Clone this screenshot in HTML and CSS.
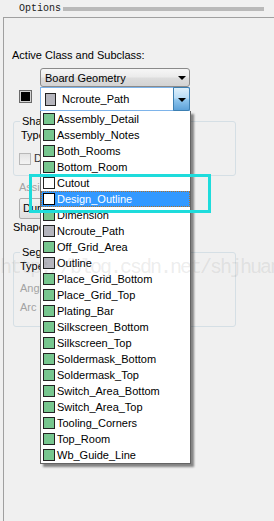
FILE: index.html
```html
<!DOCTYPE html>
<html lang="en">
<head>
    <meta charset="UTF-8">
    <meta name="viewport" content="width=device-width, initial-scale=1.0">
    <title>Options</title>
    <link rel="stylesheet" href="styles.css">
</head>
<body>
    <div class="window">
        <div class="title-row">
            <span class="title">Options</span>
            <span class="title-bar"></span>
        </div>

        <div class="frame">
            <div class="caption">Active Class and Subclass:</div>

            <div class="combo combo-class">
                <span class="combo-text">Board Geometry</span>
                <span class="arrow"></span>
            </div>

            <div class="subclass-row">
                <span class="color-box"><span class="color-fill"></span></span>
                <div class="combo-wrap">
                    <div class="combo combo-sub">
                        <span class="swatch gray"></span>
                        <span class="combo-text">Ncroute_Path</span>
                        <span class="drop-btn"><span class="arrow"></span></span>
                    </div>

                    <ul class="dropdown">
                        <li><span class="swatch green"></span>Assembly_Detail</li>
                        <li><span class="swatch green"></span>Assembly_Notes</li>
                        <li><span class="swatch green"></span>Both_Rooms</li>
                        <li><span class="swatch green"></span>Bottom_Room</li>
                        <li><span class="swatch white"></span>Cutout</li>
                        <li class="selected"><span class="swatch white"></span>Design_Outline</li>
                        <li><span class="swatch green"></span>Dimension</li>
                        <li><span class="swatch gray"></span>Ncroute_Path</li>
                        <li><span class="swatch green"></span>Off_Grid_Area</li>
                        <li><span class="swatch gray"></span>Outline</li>
                        <li><span class="swatch green"></span>Place_Grid_Bottom</li>
                        <li><span class="swatch green"></span>Place_Grid_Top</li>
                        <li><span class="swatch green"></span>Plating_Bar</li>
                        <li><span class="swatch green"></span>Silkscreen_Bottom</li>
                        <li><span class="swatch green"></span>Silkscreen_Top</li>
                        <li><span class="swatch green"></span>Soldermask_Bottom</li>
                        <li><span class="swatch green"></span>Soldermask_Top</li>
                        <li><span class="swatch green"></span>Switch_Area_Bottom</li>
                        <li><span class="swatch green"></span>Switch_Area_Top</li>
                        <li><span class="swatch green"></span>Tooling_Corners</li>
                        <li><span class="swatch green"></span>Top_Room</li>
                        <li><span class="swatch green"></span>Wb_Guide_Line</li>
                    </ul>
                </div>
            </div>

            <fieldset class="group group-shape">
                <legend>Shape Fill</legend>
                <div class="field">Type:</div>
                <label class="check"><span class="checkbox"></span>Dynamic thermal</label>
            </fieldset>

            <div class="field field-assign disabled">Assign net name:</div>
            <div class="select">Dummy Net</div>
            <div class="field field-grid">Shape grid:</div>

            <fieldset class="group group-seg">
                <legend>Segment Type</legend>
                <div class="field field-type">Type:</div>
                <div class="field field-angle disabled">Angle:</div>
                <div class="field field-arc disabled">Arc radius:</div>
            </fieldset>
        </div>

        <div class="highlight-box"></div>
        <div class="watermark">http://blog.csdn.net/shjhuang</div>
    </div>
</body>
</html>
```

FILE: styles.css
```css
* {
    box-sizing: border-box;
    margin: 0;
    padding: 0;
}

body {
    background-color: #f0f0f0;
    font-family: 'Liberation Sans', Arial, sans-serif;
    font-size: 11px;
    color: #000;
}

.window {
    position: relative;
    width: 274px;
    height: 521px;
    overflow: hidden;
}

/* Title line */
.title-row {
    display: flex;
    align-items: center;
    height: 17px;
}

.title {
    padding-left: 19px;
    font-family: 'Liberation Mono', monospace;
    font-size: 10px;
    line-height: 12px;
    color: #1a1a1a;
}

.title-bar {
    flex: 1;
    height: 4px;
    margin: 1px 10px 0 2px;
    background-color: #b9b9b9;
}

/* Main frame */
.frame {
    height: 504px;
    margin-left: 3px;
    padding-left: 8px;
    border-top: 1px solid #a0a0a0;
    border-left: 1px solid #a0a0a0;
}

.caption {
    margin-top: 31px;
    line-height: 13px;
}

.combo {
    display: flex;
    align-items: center;
    width: 150px;
}

.combo-class {
    height: 19px;
    margin: 6px 0 0 28px;
    padding-left: 4px;
    border: 1px solid #8a8a8a;
    border-radius: 3px;
    background: linear-gradient(#f6f6f6, #ebebeb 48%, #dddddd 52%, #d3d3d3);
}

.combo-class .arrow {
    margin: 0 3px 0 auto;
}

.arrow {
    width: 0;
    height: 0;
    border-left: 4px solid transparent;
    border-right: 4px solid transparent;
    border-top: 4px solid #000;
}

.subclass-row {
    display: flex;
    align-items: flex-start;
}

.color-box {
    display: flex;
    width: 13px;
    height: 13px;
    margin: 3px 0 0 7px;
    padding: 1px;
    border: 1px solid #6a6a6a;
    background-color: #d4d4d4;
}

.color-fill {
    flex: 1;
    background-color: #000;
}

.combo-wrap {
    position: relative;
    margin-left: 8px;
}

.combo-sub {
    height: 24px;
    border: 1px solid #7eb4ea;
    background-color: #fff;
}

.combo-sub .swatch {
    width: 11px;
    height: 13px;
    margin-left: 4px;
}

.combo-sub .combo-text {
    margin-left: 6px;
}

.drop-btn {
    display: flex;
    align-items: center;
    justify-content: center;
    align-self: stretch;
    width: 17px;
    margin: -1px -1px -1px auto;
    border: 1px solid #3c7fb1;
    border-radius: 0 2px 2px 0;
    background: linear-gradient(#dff0fb, #b9dcf5 45%, #8cc4ec 55%, #5da2d9);
}

.drop-btn .arrow {
    margin-top: 2px;
}

/* Colour swatches */
.swatch {
    flex-shrink: 0;
    width: 12px;
    height: 12px;
    border: 1px solid #222;
}

.swatch.green {
    background-color: #77c68f;
}

.swatch.gray {
    background-color: #b5b5bd;
}

.swatch.white {
    background-color: #fff;
}

/* Open list */
.dropdown {
    position: absolute;
    top: 100%;
    left: 0;
    z-index: 2;
    width: 151px;
    list-style: none;
    background-color: #fff;
    border: 1px solid #646464;
    border-top: none;
    box-shadow: 3px 3px 2px rgba(0, 0, 0, 0.45);
}

.dropdown li {
    display: flex;
    align-items: center;
    height: 16px;
    padding-left: 2px;
    white-space: nowrap;
}

.dropdown li .swatch {
    margin-right: 2px;
}

.dropdown li.selected {
    background-color: #3399ff;
    color: #fff;
    outline: 1px dotted #b0702a;
    outline-offset: -1px;
}

.dropdown li.selected .swatch {
    border-color: #000;
}

/* Group boxes under the list */
.group {
    width: 223px;
    margin-left: 1px;
    border: 1px solid #d5dfe5;
    border-radius: 3px;
}

.group legend {
    margin-left: 6px;
    padding: 0 2px;
    line-height: 13px;
}

.field {
    line-height: 13px;
}

.disabled {
    color: #a3a3a3;
}

.group-shape {
    margin-top: 4px;
    padding-bottom: 10px;
}

.group-shape .field {
    margin: 1px 0 0 7px;
}

.check {
    display: flex;
    align-items: center;
    gap: 3px;
    margin: 10px 0 0 5px;
    line-height: 13px;
    color: #333;
}

.checkbox {
    width: 12px;
    height: 12px;
    border: 1px solid #b8b8b8;
    background: linear-gradient(#e4e4e4, #f4f4f4);
}

.field-assign {
    margin: 5px 0 0 7px;
}

.select {
    width: 140px;
    height: 21px;
    margin: 4px 0 0 7px;
    padding-left: 3px;
    line-height: 19px;
    border: 1px solid #acacac;
    border-radius: 2px;
    background: linear-gradient(#f2f2f2, #e0e0e0);
}

.field-grid {
    margin: 2px 0 0 1px;
}

.group-seg {
    margin-top: 12px;
    padding-bottom: 12px;
}

.field-type {
    margin: 1px 0 0 6px;
}

.field-angle {
    margin: 9px 0 0 6px;
}

.field-arc {
    margin: 6px 0 0 6px;
}

/* Annotation overlays */
.highlight-box {
    position: absolute;
    left: 29px;
    top: 174px;
    z-index: 3;
    width: 182px;
    height: 39px;
    border: 3px solid #1edcdc;
}

.watermark {
    position: absolute;
    left: 0;
    top: 258px;
    z-index: 4;
    font-family: 'Liberation Mono', monospace;
    font-size: 20px;
    line-height: 20px;
    letter-spacing: -2px;
    color: rgba(120, 120, 120, 0.15);
    white-space: nowrap;
}
```
